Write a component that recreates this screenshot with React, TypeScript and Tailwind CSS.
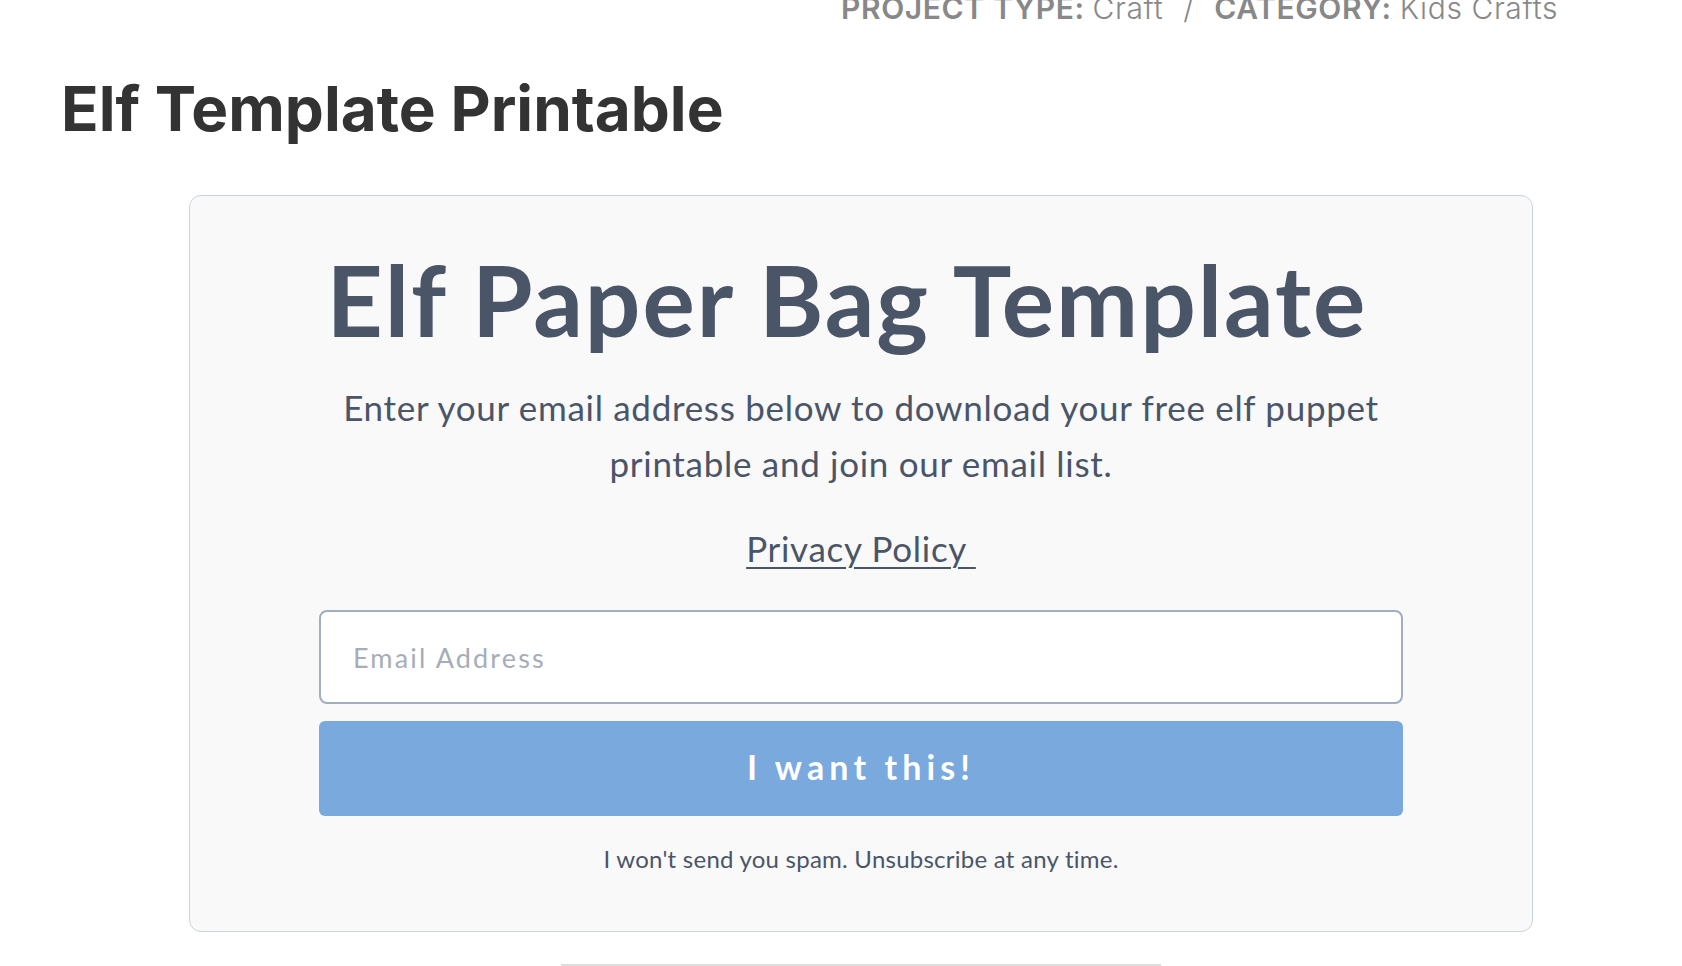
export default function App() {
  return (
    <div className="h-[966px] overflow-hidden bg-white">
      {/* Post meta */}
      <div
        className="-mt-[7px] flex justify-end pr-[124px] text-[30px] leading-[30px] tracking-[0.02em] text-[#888888]"
        style={{ fontFamily: "Inter, 'Noto Sans', sans-serif" }}
      >
        <span className="font-semibold">PROJECT TYPE:</span>
        <span className="ml-2 font-light">Craft</span>
        <span className="mx-5 font-light">/</span>
        <span className="font-semibold">CATEGORY:</span>
        <span className="ml-2 font-light">Kids Crafts</span>
      </div>

      <h1
        className="ml-[61px] mt-[50px] text-[62px] font-bold leading-[72px] text-[#333333]"
        style={{ fontFamily: "Inter, 'Noto Sans', sans-serif" }}
      >
        Elf Template Printable
      </h1>

      {/* Opt-in card */}
      <div
        className="ml-[189px] mt-[50px] w-[1344px] rounded-xl border border-[#c9d3df] bg-[#f9f9f9] px-[129px] pb-[56px] pt-[46px] text-center text-[#4a5568]"
        style={{ fontFamily: "Lato, 'Noto Sans', sans-serif" }}
      >
        <h2 className="pr-[28px] text-[98px] font-bold leading-[115px] tracking-[0.02em]">
          Elf Paper Bag Template
        </h2>
        <p className="mx-auto mt-[22px] max-w-[1084px] text-[35px] leading-[56px] tracking-[0.02em]">
          Enter your email address below to download your free elf puppet
          printable and join our email list.
        </p>
        <p className="mt-[29px] text-[35px] leading-[56px] tracking-[0.02em]">
          <a href="#" className="underline underline-offset-[5px] decoration-[2px]">
            Privacy Policy&nbsp;
          </a>
        </p>

        <form className="mt-[34px]" onSubmit={(e) => e.preventDefault()}>
          <input
            type="email"
            placeholder="Email Address"
            className="block h-[94px] w-full rounded-lg border-2 border-[#a0aec0] bg-white px-[32px] text-[27px] tracking-[0.08em] text-[#4a5568] placeholder:text-[#a6adb9] focus:outline-none"
          />
          <button
            type="submit"
            className="mt-[17px] block h-[95px] w-full rounded-md bg-[#79a9dd] pb-[4px] text-[34px] font-bold tracking-[0.15em] text-white"
          >
            I want this!
          </button>
        </form>

        <p className="mt-[26px] text-[24px] leading-[33px] tracking-[0.01em]">
          I won't send you spam. Unsubscribe at any time.
        </p>
      </div>

      <div className="ml-[561px] mt-[32px] h-[2px] w-[600px] bg-[#dddddd]" />
    </div>
  );
}
